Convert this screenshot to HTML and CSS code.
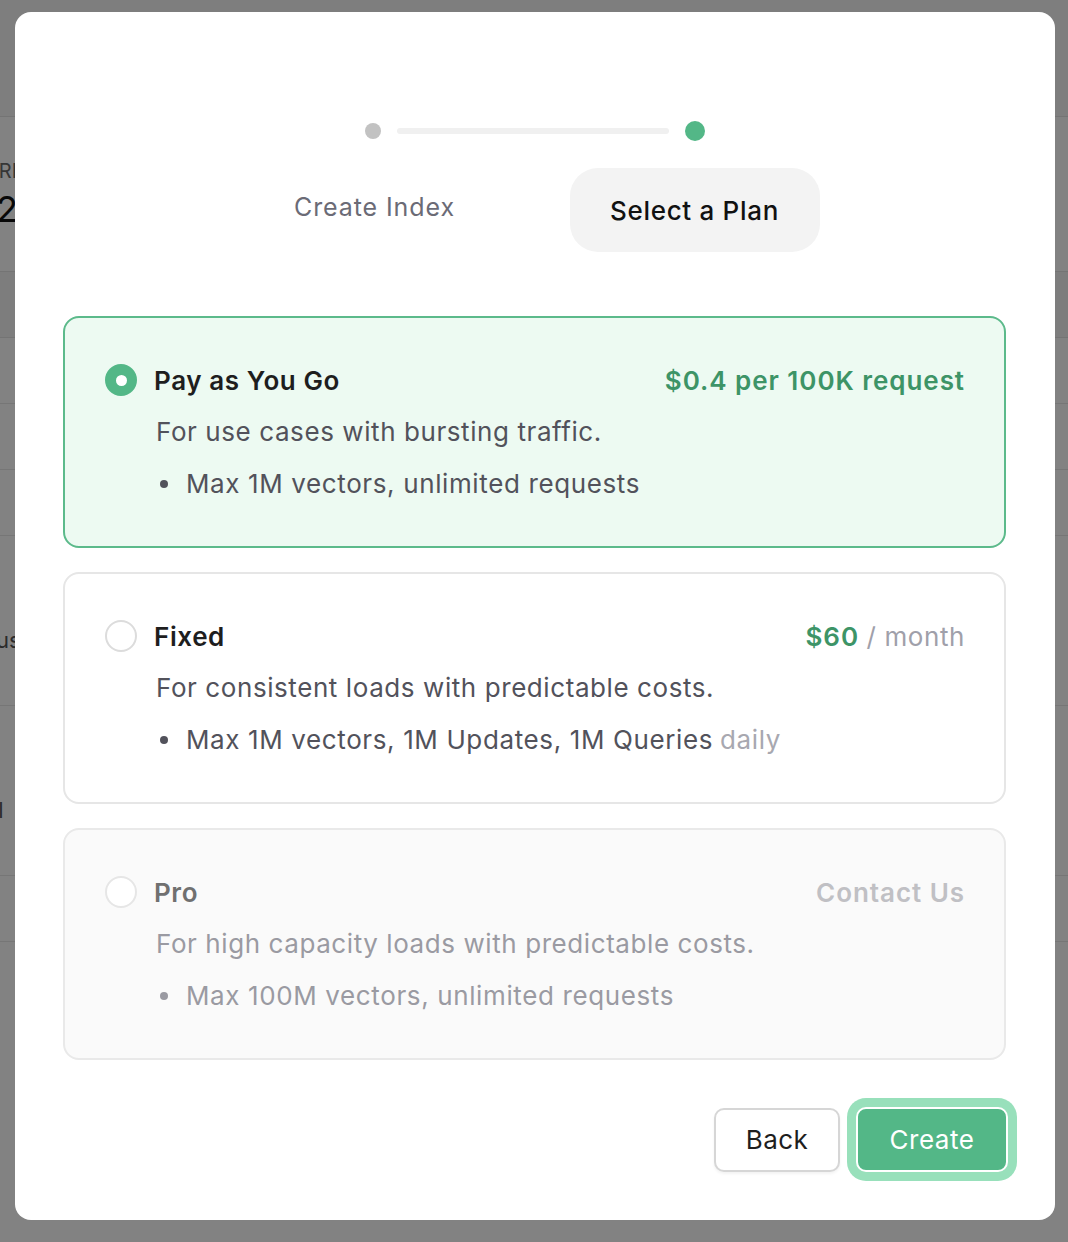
FILE: index.html
```html
<!DOCTYPE html>
<html lang="en">
<head>
<meta charset="utf-8">
<title>Select a Plan</title>
<link rel="stylesheet" href="styles.css">
</head>
<body>
<div class="backdrop">
  <div class="bg-header"></div>
  <div class="bg-stats">
    <div class="bg-label">PRI</div>
    <div class="bg-value">2</div>
  </div>
  <div class="bg-thead"></div>
  <div class="bg-row"></div>
  <div class="bg-row"></div>
  <div class="bg-row"></div>
  <div class="bg-row tall"><span class="bg-cell">Status</span></div>
  <div class="bg-row tall"><span class="bg-cell">x-url</span></div>
  <div class="bg-row"></div>
</div>
<div class="overlay">
  <div class="modal">
    <div class="stepper">
      <div class="track">
        <span class="dot done"></span>
        <span class="line"></span>
        <span class="dot active"></span>
      </div>
      <div class="steps">
        <div class="step"><span class="step-label">Create Index</span></div>
        <div class="step"><span class="step-label current">Select a Plan</span></div>
      </div>
    </div>

    <div class="plans">
      <div class="plan selected">
        <div class="plan-head">
          <span class="radio checked"></span>
          <span class="plan-name">Pay as You Go</span>
          <span class="plan-price">$0.4 per 100K request</span>
        </div>
        <p class="plan-desc">For use cases with bursting traffic.</p>
        <ul class="plan-list"><li>Max 1M vectors, unlimited requests</li></ul>
      </div>
      <div class="plan">
        <div class="plan-head">
          <span class="radio"></span>
          <span class="plan-name">Fixed</span>
          <span class="plan-price">$60 <span class="unit">/ month</span></span>
        </div>
        <p class="plan-desc">For consistent loads with predictable costs.</p>
        <ul class="plan-list"><li>Max 1M vectors, 1M Updates, 1M Queries <span class="muted">daily</span></li></ul>
      </div>
      <div class="plan disabled">
        <div class="plan-head">
          <span class="radio"></span>
          <span class="plan-name">Pro</span>
          <span class="plan-price">Contact Us</span>
        </div>
        <p class="plan-desc">For high capacity loads with predictable costs.</p>
        <ul class="plan-list"><li>Max 100M vectors, unlimited requests</li></ul>
      </div>
    </div>

    <div class="actions">
      <button class="btn btn-back">Back</button>
      <button class="btn btn-create">Create</button>
    </div>
  </div>
</div>
</body>
</html>
```

FILE: styles.css
```css
* { box-sizing: border-box; }
html, body { margin: 0; padding: 0; }
body {
  width: 1068px;
  height: 1242px;
  overflow: hidden;
  font-family: Inter, "Noto Sans", "Liberation Sans", sans-serif;
  background: #ffffff;
  position: relative;
}

/* backdrop page (behind overlay) */
.backdrop { height: 100%; }
.bg-header { height: 117px; background: #f8f8f8; border-bottom: 1px solid #e4e4e4; }
.bg-stats { height: 155px; padding: 42px 0 0 0; border-bottom: 1px solid #e4e4e4; }
.bg-label { font-size: 20px; color: #6b6b6b; line-height: 24px; margin-left: -14px; }
.bg-value { font-size: 36px; color: #111; line-height: 44px; margin-left: -4px; margin-top: 4px; }
.bg-thead { height: 66px; background: #f6f6f6; border-bottom: 1px solid #e4e4e4; }
.bg-row { height: 66px; border-bottom: 1px solid #e8e8e8; display: flex; align-items: center; }
.bg-row.tall { height: 170px; padding-top: 38px; }
.bg-cell { font-size: 22px; color: #555; margin-left: -45px; }

.overlay {
  position: absolute;
  inset: 0;
  background: rgba(0, 0, 0, 0.49);
  padding: 12px 13px 22px 15px;
}

.modal {
  background: #fff;
  border-radius: 16px;
  width: 1040px;
  height: 1208px;
  padding: 110px 49px 48px 48px;
  display: flex;
  flex-direction: column;
}

/* stepper */
.stepper { width: 640px; margin: 0 auto; }
.track {
  display: flex;
  align-items: center;
  justify-content: center;
  gap: 16px;
  height: 18px;
}
.dot { border-radius: 50%; flex: none; }
.dot.done { width: 16px; height: 16px; background: #c2c2c2; }
.dot.active { width: 20px; height: 20px; background: #53b787; }
.line { width: 272px; height: 6px; border-radius: 3px; background: #f0f0f0; }
.steps { display: grid; grid-template-columns: 1fr 1fr; margin-top: 28px; }
.step { display: flex; justify-content: center; }
.step-label {
  display: inline-flex;
  align-items: center;
  height: 84px;
  padding: 0 30px 6px;
  border-radius: 28px;
  font-size: 25px;
  color: #6b6b76;
  letter-spacing: 0.9px;
}
.step-label.current {
  background: #f3f3f3;
  color: #111;
  font-weight: 500;
  font-size: 26px;
  letter-spacing: 0.7px;
  padding-bottom: 0;
  width: 250px;
  justify-content: center;
}

/* plans */
.plans { display: flex; flex-direction: column; gap: 24px; margin-top: 64px; }
.plan {
  height: 232px;
  border: 2px solid #e6e6e6;
  border-radius: 16px;
  padding: 36px 39px 0 40px;
  background: #fff;
}
.plan.selected { background: #edfaf2; border-color: #5cba8b; }
.plan.disabled { background: #fafafa; border-color: #e9e9e9; }
.plan-head { display: flex; align-items: center; height: 52px; }
.radio {
  width: 32px; height: 32px;
  border-radius: 50%;
  border: 2px solid #dcdcdc;
  background: #fff;
  flex: none;
  margin-right: 17px;
  display: flex; align-items: center; justify-content: center;
}
.plan.disabled .radio { border-color: #e6e6e6; }
.radio.checked { background: #53b787; border-color: #53b787; }
.radio.checked::after {
  content: "";
  width: 11px; height: 11px;
  border-radius: 50%;
  background: #fff;
}
.plan-name { font-size: 26px; font-weight: 600; color: #1e1e1e; flex: 1; letter-spacing: 0.6px; }
.plan-price { font-size: 26px; font-weight: 600; color: #3d9467; letter-spacing: 0.95px; }
.unit { font-weight: 400; color: #a0a0aa; letter-spacing: 0.6px; }
.plan.disabled .plan-name { color: #707070; }
.plan.disabled .plan-price { color: #c0c0c4; }

.plan-desc { margin: 0 0 0 51px; font-size: 26px; line-height: 52px; color: #52525b; letter-spacing: 0.58px; }
.plan-list { margin: 0 0 0 51px; padding: 0; list-style: none; }
.plan-list li { font-size: 26px; line-height: 52px; color: #52525b; display: flex; align-items: center; letter-spacing: 0.62px; }
.plan-list li::before {
  content: "";
  width: 8px; height: 8px; border-radius: 50%;
  background: #52525b;
  margin: 0 18px 0 4px;
  flex: none;
}
.plan-list .muted { color: #a8a8b0; margin-left: 7px; }
.plan.disabled .plan-desc,
.plan.disabled .plan-list li { color: #9a9aa2; }
.plan.disabled .plan-list li::before { background: #9a9aa2; }

/* actions */
.actions {
  margin-top: auto;
  margin-right: -2px;
  display: flex;
  justify-content: flex-end;
  align-items: center;
  gap: 16px;
}
.btn {
  font-family: inherit;
  font-size: 26px;
  border-radius: 10px;
  cursor: pointer;
  letter-spacing: 0.5px;
}
.btn-back {
  width: 126px; height: 64px;
  background: #fff;
  border: 2px solid #d6d6d6;
  color: #1e1e1e;
  box-shadow: 0 2px 3px rgba(0,0,0,0.05);
}
.btn-create {
  width: 152px; height: 65px;
  background: #53b787;
  color: #fff;
  border: 2px solid #fff;
  box-shadow: 0 0 0 9px #98e0bb;
}
```
